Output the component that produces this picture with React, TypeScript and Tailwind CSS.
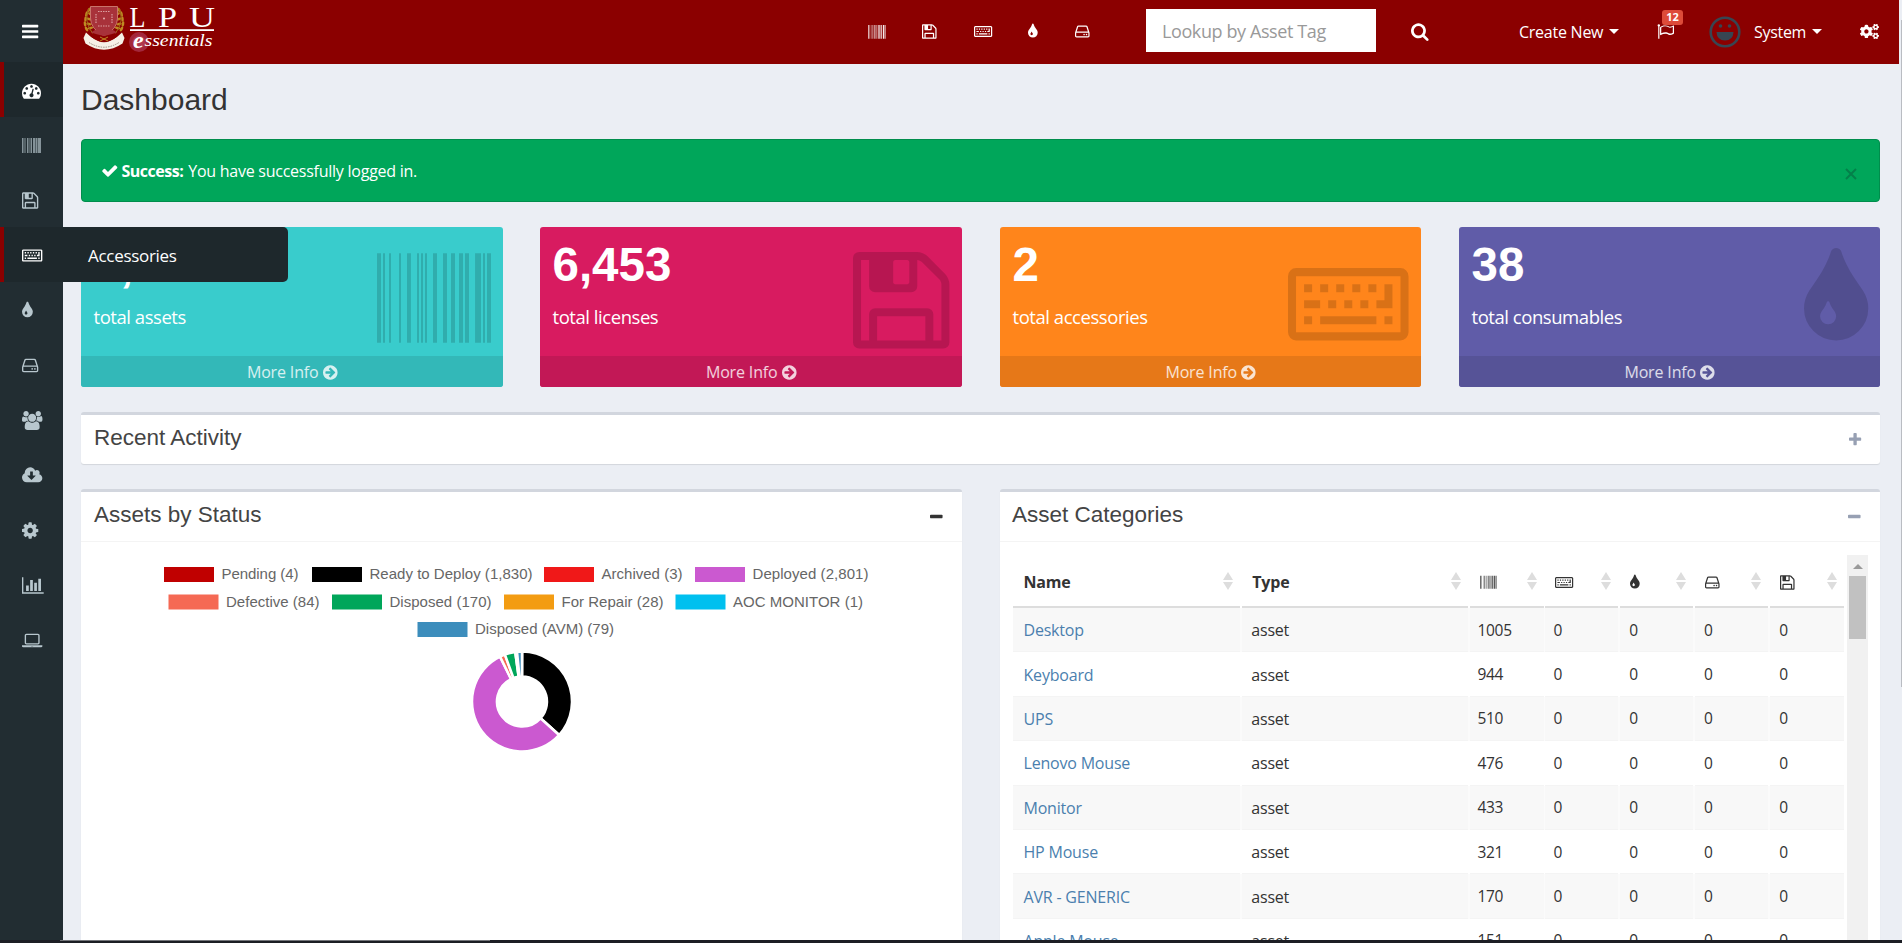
import React from "react";
import { FaCogs } from "react-icons/fa";

type Glyph = { w: number; d: string };

const G: Record<string, Glyph> = {
  bars: { w: 1536, d: "M1536 1344v128q0 26-19 45t-45 19h-1408q-26 0-45-19t-19-45v-128q0-26 19-45t45-19h1408q26 0 45 19t19 45zm0-512v128q0 26-19 45t-45 19h-1408q-26 0-45-19t-19-45v-128q0-26 19-45t45-19h1408q26 0 45 19t19 45zm0-512v128q0 26-19 45t-45 19h-1408q-26 0-45-19t-19-45v-128q0-26 19-45t45-19h1408q26 0 45 19t19 45z" },
  dash: { w: 1792, d: "M384 1152q0-53-37.5-90.5t-90.5-37.5-90.5 37.5-37.5 90.5 37.5 90.5 90.5 37.5 90.5-37.5 37.5-90.5zm192-448q0-53-37.5-90.5t-90.5-37.5-90.5 37.5-37.5 90.5 37.5 90.5 90.5 37.5 90.5-37.5 37.5-90.5zm428 481l101-382q6-26-7.5-48.5t-38.5-29.5-48 6.5-30 39.5l-101 382q-60 5-107 43.5t-63 98.5q-20 77 20 146t117 89 146-20 89-117q16-60-6-117t-72-91zm660-33q0-53-37.5-90.5t-90.5-37.5-90.5 37.5-37.5 90.5 37.5 90.5 90.5 37.5 90.5-37.5 37.5-90.5zm-640-640q0-53-37.5-90.5t-90.5-37.5-90.5 37.5-37.5 90.5 37.5 90.5 90.5 37.5 90.5-37.5 37.5-90.5zm448 192q0-53-37.5-90.5t-90.5-37.5-90.5 37.5-37.5 90.5 37.5 90.5 90.5 37.5 90.5-37.5 37.5-90.5zm320 448q0 261-141 483-19 29-54 29h-1402q-35 0-54-29-141-221-141-483 0-182 71-348t191-286 286-191 348-71 348 71 286 191 191 286 71 348z" },
  barcode: { w: 1792, d: "M63 1600h-63v-1408h63v1408zM126 1600h-32v-1407h32v1407zM220 1600h-31v-1407h31v1407zM377 1600h-31v-1407h31v1407zM534 1600h-62v-1407h62v1407zM660 1600h-31v-1407h31v1407zM723 1600h-31v-1407h31v1407zM786 1600h-31v-1407h31v1407zM943 1600h-63v-1407h63v1407zM1100 1600h-63v-1407h63v1407zM1226 1600h-63v-1407h63v1407zM1352 1600h-63v-1407h63v1407zM1446 1600h-63v-1407h63v1407zM1635 1600h-94v-1407h94v1407zM1698 1600h-32v-1407h32v1407zM1792 1600h-63v-1407h63v1407z" },
  floppy: { w: 1536, d: "M384 1536h768v-384h-768v384zm896 0h128v-896q0-14-10-38.500t-20-34.500l-281-281q-10-10-34-20t-39-10v416q0 40-28 68t-68 28h-576q-40 0-68-28t-28-68v-416h-128v1280h128v-416q0-40 28-68t68-28h832q40 0 68 28t28 68v416zm-384-928v-320q0-13-9.500-22.500t-22.500-9.500h-192q-13 0-22.500 9.500t-9.500 22.500v320q0 13 9.500 22.500t22.500 9.500h192q13 0 22.500-9.500t9.500-22.500zm640 32v928q0 40-28 68t-68 28h-1344q-40 0-68-28t-28-68v-1344q0-40 28-68t68-28h928q40 0 88 20t76 48l280 280q28 28 48 76t20 88z" },
  keyboard: { w: 1920, d: "M128 320h1664q53 0 90.500 37.500t37.500 90.500v896q0 53-37.500 90.500t-90.500 37.500h-1664q-53 0-90.500-37.500t-37.500-90.500v-896q0-53 37.500-90.500t90.500-37.500zM128 448v896h1664v-896zM256 576h128v128h-128zM512 576h128v128h-128zM768 576h128v128h-128zM1024 576h128v128h-128zM1280 576h128v128h-128zM1536 576h128v384h-256v-128h128zM256 832h256v128h-256zM640 832h128v128h-128zM896 832h128v128h-128zM1152 832h128v128h-128zM256 1088h128v128h-128zM512 1088h896v128h-896zM1536 1088h128v128h-128z" },
  tint: { w: 1024, d: "M512 1152q0-36-20-69-1-1-15.500-22.500t-25.500-38-25-44-21-50.500q-4-16-21-16t-21 16q-7 23-21 50.500t-25 44-25.500 38-15.500 22.500q-20 33-20 69 0 53 37.500 90.500t90.500 37.500 90.500-37.500 37.500-90.500zm512-128q0 212-150 362t-362 150-362-150-150-362q0-145 81-275 6-9 62.500-90.500t101-151 99.500-178 83-201.500q9-30 34-47t51-17 51.500 17 33.500 47q28 93 83 201.500t99.500 178 101 151 62.500 90.500q81 127 81 275z" },
  hdd: { w: 1536, d: "M1040 1216q0 33-23.500 56.500t-56.500 23.500-56.500-23.500-23.500-56.500 23.500-56.500 56.500-23.500 56.500 23.500 23.500 56.500zm256 0q0 33-23.500 56.500t-56.500 23.500-56.500-23.500-23.500-56.500 23.500-56.500 56.500-23.500 56.500 23.500 23.500 56.500zm112 160v-320q0-13-9.500-22.500t-22.500-9.500h-1216q-13 0-22.500 9.500t-9.500 22.500v320q0 13 9.500 22.500t22.500 9.500h1216q13 0 22.500-9.500t9.500-22.500zm-1230-480h1180l-157-482q-4-13-16-21.500t-26-8.500h-782q-14 0-26 8.500t-16 21.500zm1358 160v320q0 66-47 113t-113 47h-1216q-66 0-113-47t-47-113v-320q0-25 16-75l197-606q17-53 63-86t101-33h782q55 0 101 33t63 86l197 606q16 50 16 75z" },
  users: { w: 1920, d: "M593 896q-162 5-265 128h-134q-82 0-138-40.500t-56-118.500q0-353 124-353 6 0 43.500 21t97.500 42.500 119 21.500q67 0 133-23-5 37-5 66 0 159 93 293zm1071 637q0 120-73 189.500t-194 69.500h-874q-121 0-194-69.500t-73-189.500q0-53 3.500-103.500t14-109 26.500-108.500 43-97.500 62-81 85.500-53.500 111.500-20q10 0 43 21.500t73 48 107 48 135 21.500 135-21.500 107-48 73-48 43-21.500q61 0 111.500 20t85.500 53.500 62 81 43 97.500 26.500 108.500 14 109 3.500 103.500zm-1024-1277q0 106-75 181t-181 75-181-75-75-181 75-181 181-75 181 75 75 181zm704 384q0 159-112.500 271.500t-271.500 112.500-271.500-112.500-112.500-271.500 112.500-271.500 271.500-112.500 271.500 112.500 112.500 271.500zm576 225q0 78-56 118.500t-138 40.500h-134q-103-123-265-128 93-134 93-293 0-29-5-66 66 23 133 23 59 0 119-21.500t97.500-42.500 43.500-21q124 0 124 353zm-128-609q0 106-75 181t-181 75-181-75-75-181 75-181 181-75 181 75 75 181z" },
  cloud: { w: 1920, d: "M1280 928q0-14-9-23t-23-9h-224v-352q0-13-9.500-22.500t-22.500-9.500h-192q-13 0-22.500 9.500t-9.500 22.500v352h-224q-13 0-22.500 9.500t-9.500 22.500q0 14 9 23l352 352q9 9 23 9t23-9l351-351q10-12 10-24zm640 224q0 159-112.500 271.500t-271.500 112.500h-1088q-185 0-316.500-131.500t-131.500-316.500q0-130 70-240t188-165q-2-30-2-43 0-212 150-362t362-150q156 0 285.500 87t188.500 231q71-62 166-62 106 0 181 75t75 181q0 76-41 138 130 31 213.500 135.500t83.500 238.500z" },
  cog: { w: 1536, d: "M1024 896q0-106-75-181t-181-75-181 75-75 181 75 181 181 75 181-75 75-181zm512-109v222q0 12-8 23t-20 13l-185 28q-19 54-39 91 35 50 107 138 10 12 10 25t-9 23q-27 37-99 108t-94 71q-12 0-26-9l-138-108q-44 23-91 38-16 136-29 186-7 28-36 28h-222q-14 0-24.500-8.500t-11.500-21.500l-28-184q-49-16-90-37l-141 107q-10 9-25 9-14 0-25-11-126-114-165-168-7-10-7-23 0-12 8-23 15-21 51-66.500t54-70.500q-27-50-41-99l-183-27q-13-2-21-12.500t-8-23.500v-222q0-12 8-23t19-13l186-28q14-46 39-92-40-57-107-138-10-12-10-24 0-10 9-23 26-36 98.500-107.500t94.500-71.500q13 0 26 10l138 107q44-23 91-38 16-136 29-186 7-28 36-28h222q14 0 24.500 8.500t11.500 21.500l28 184q49 16 90 37l142-107q9-9 24-9 13 0 25 10 129 119 165 170 7 8 7 22 0 12-8 23-15 21-51 66.500t-54 70.500q26 50 41 98l183 28q13 2 21 12.500t8 23.500z" },
  chart: { w: 2048, d: "M640 896v512h-256v-512h256zm384-512v1024h-256v-1024h256zm1024 1152v128h-2048v-1536h128v1408h1920zm-640-896v768h-256v-768h256zm384-384v1152h-256v-1152h256z" },
  laptop: { w: 1920, d: "M416 1280q-66 0-113-47t-47-113v-704q0-66 47-113t113-47h1088q66 0 113 47t47 113v704q0 66-47 113t-113 47h-1088zm-32-864v704q0 13 9.500 22.500t22.500 9.500h1088q13 0 22.500-9.500t9.500-22.500v-704q0-13-9.500-22.500t-22.500-9.500h-1088q-13 0-22.500 9.500t-9.500 22.500zm1376 928h160v96q0 40-47 68t-113 28h-1600q-66 0-113-28t-47-68v-96h1760zm-720 96q16 0 16-16t-16-16h-160q-16 0-16 16t16 16h160z" },
  search: { w: 1664, d: "M1152 832q0-185-131.500-316.500t-316.500-131.500-316.500 131.500-131.500 316.500 131.500 316.500 316.500 131.500 316.500-131.500 131.500-316.500zm512 832q0 52-38 90t-90 38q-54 0-90-38l-343-342q-179 124-399 124-143 0-273.500-55.500t-225-150-150-225-55.500-273.500 55.500-273.500 150-225 225-150 273.500-55.500 273.500 55.500 225 150 150 225 55.500 273.500q0 220-124 399l343 343q37 37 37 90z" },
  flag: { w: 1792, d: "M1664 1015v-616q-169 91-306 91-82 0-145-32-100-49-184-76.500t-178-27.500q-173 0-403 127v599q245-113 433-113 55 0 103.500 7.500t98 26 77 31 82.500 39.500l28 14q44 22 101 22 120 0 293-92zM320 256q0 72-64 110v1266q0 13-9.500 22.500t-22.500 9.500h-64q-13 0-22.500-9.500t-9.500-22.500v-1266q-64-38-64-110 0-53 37.500-90.500t90.500-37.500 90.500 37.500 37.500 90.500zm1472 64v763q0 39-35 57-10 5-17 9-218 116-369 116-88 0-158-35l-28-14q-64-33-99-48t-91-29-114-14q-102 0-235.500 44t-228.500 102q-15 9-33 9-16 0-32-8-32-19-32-56v-742q0-35 31-55 35-21 78.500-42.500t114-52 152.500-49.500 155-19q112 0 209 31t209 86q38 19 89 19 122 0 310-112 22-12 31-17 31-16 62 2 31 20 31 55z" },
  check: { w: 1792, d: "M1671 566q0 40-28 68l-724 724-136 136q-28 28-68 28t-68-28l-136-136-362-362q-28-28-28-68t28-68l136-136q28-28 68-28t68 28l294 295 656-657q28-28 68-28t68 28l136 136q28 28 28 68z" },
  arrow: { w: 1536, d: "M1285 896q0-27-18-45l-91-91-362-362q-18-18-45-18t-45 18l-91 91q-18 18-18 45t18 45l189 189h-502q-26 0-45 19t-19 45v128q0 26 19 45t45 19h502l-189 189q-19 19-19 45t19 45l91 91q18 18 45 18t45-18l362-362 91-91q18-18 18-45zm251 0q0 209-103 385.500t-279.500 279.500-385.500 103-385.500-103-279.500-279.500-103-385.500 103-385.500 279.500-279.500 385.500-103 385.500 103 279.500 279.500 103 385.500z" },
  plus: { w: 1408, d: "M1408 736v192q0 40-28 68t-68 28h-416v416q0 40-28 68t-68 28h-192q-40 0-68-28t-28-68v-416h-416q-40 0-68-28t-28-68v-192q0-40 28-68t68-28h416v-416q0-40 28-68t68-28h192q40 0 68 28t28 68v416h416q40 0 68 28t28 68z" },
  minus: { w: 1408, d: "M1408 736v192q0 40-28 68t-68 28h-1216q-40 0-68-28t-28-68v-192q0-40 28-68t68-28h1216q40 0 68 28t28 68z" },
};

function Icon({ name, size, className = "" }: { name: string; size: number; className?: string }) {
  const g = G[name];
  return (
    <svg
      className={`block shrink-0 ${className}`}
      width={(g.w / 1792) * size}
      height={size}
      viewBox={`0 0 ${g.w} 1792`}
      fill="currentColor"
      fillRule="evenodd"
      overflow="visible"
      aria-hidden="true"
    >
      <path d={g.d} />
    </svg>
  );
}

const nav = ["dash", "barcode", "floppy", "keyboard", "tint", "hdd", "users", "cloud", "cog", "chart", "laptop"];

function Sidebar() {
  return (
    <aside className="flex w-[63px] shrink-0 flex-col bg-[#222d32] text-[#b8c7ce]">
      <div className="flex h-[62px] shrink-0 items-center pl-[22px] text-white">
        <Icon name="bars" size={19} />
      </div>
      {nav.map((n, i) => {
        const on = i === 0 || i === 3;
        return (
          <div
            key={n}
            className={`relative flex h-[55px] shrink-0 items-center border-l-4 pt-0.5 pl-[18px] ${
              on ? "border-[#8b0000] bg-[#1e282c] text-white" : "border-transparent"
            }`}
          >
            <Icon name={n} size={19} />
            {i === 3 && (
              <div className="absolute top-0 left-[59px] z-10 flex h-[55px] w-[225px] items-center rounded-r-[5px] bg-[#1e282c] pt-0.5 pl-[25px] text-[17px] tracking-[-0.3px] text-white">
                Accessories
              </div>
            )}
          </div>
        );
      })}
    </aside>
  );
}

function Laurel({ flip }: { flip?: boolean }) {
  const leaves = [
    [6, 7, -60], [3.5, 11, -75], [2.5, 16, -85], [2, 21, -100], [3.5, 26, -120],
    [7.500, 11, 30], [6, 16, 20], [6, 21, 10], [7.5, 25, -10],
  ];
  return (
    <g transform={flip ? "translate(42 0) scale(-1 1)" : undefined} fill="#c08a22">
      {leaves.map(([x, y, r], i) => (
        <ellipse key={i} cx={x} cy={y - 2} rx="2.700" ry="1.300" transform={`rotate(${r} ${x} ${y - 2})`} />
      ))}
      <path d="M6 3Q0 16 10 29" fill="none" stroke="#9c6a1a" strokeWidth="1" />
    </g>
  );
}

function Logo() {
  return (
    <svg width="134" height="50" viewBox="0 0 134 50" className="block overflow-visible" aria-label="LPU Essentials">
      <Laurel />
      <Laurel flip />
      <path d="M7.500 1.500H34.500V13Q34.500 24 21 31Q7.500 24 7.500 13Z" fill="#a8323a" stroke="#c9746a" strokeWidth="1" />
      <path d="M15 6.500H27M13 9v10M29 9v10M15 21H27" stroke="#dba0a0" strokeWidth="1.200" strokeDasharray="1.500 1" fill="none" />
      <circle cx="21" cy="13.500" r="1" fill="#e8b0b0" />
      <path d="M3 27.500Q21 46 39 27.500L41.500 33L39.500 38.500Q21 51 2.500 38.500L0.500 33Z" fill="#f6f0e6" />
      <path d="M8 31.500Q21 43 34 31.500L32 27.500Q21 34 10 27.500Z" fill="#8b0000" />
      <path d="M8 27.500Q13 29 21 31Q29 29 34 27.500L30 25H12Z" fill="#a8323a" />
      <path d="M17 36L25 32M17 32L25 36" stroke="#c08a22" strokeWidth="1" />
      <path d="M6 37.500Q21 47 36 37.500" stroke="#9c9084" strokeWidth="1" strokeDasharray="1.500 1" fill="none" />
      <g fill="#fff" style={{ fontFamily: "'Liberation Serif', serif" }}>
        <text x="46.500" y="21.500" fontSize="30" textLength="16" lengthAdjust="spacingAndGlyphs">L</text>
        <text x="75" y="21.500" fontSize="30" textLength="19" lengthAdjust="spacingAndGlyphs">P</text>
        <text x="106" y="21.500" fontSize="30" textLength="26" lengthAdjust="spacingAndGlyphs">U</text>
      </g>
      <rect x="47" y="24.200" width="84" height="1.800" fill="#fff" />
      <circle cx="56" cy="37" r="10" fill="#a3273c" />
      <circle cx="56" cy="37" r="6.500" fill="#b8445a" opacity=".6" />
      <g fill="#fff" fontStyle="italic" style={{ fontFamily: "'Liberation Serif', serif" }}>
        <text x="50" y="42.500" fontSize="24" fontWeight="700">e</text>
        <text x="61.500" y="40.500" fontSize="17" textLength="68" lengthAdjust="spacingAndGlyphs">ssentials</text>
      </g>
    </svg>
  );
}

function Caret() {
  return <span className="ml-[7px] inline-block border-x-[5px] border-t-[5px] border-x-transparent border-t-white" />;
}

function Header() {
  return (
    <header className="mr-[3px] flex h-16 shrink-0 items-center bg-[#8b0000] pb-px text-white">
      <div className="h-[60px] w-[805px] pt-[3px] pl-5">
        <Logo />
      </div>
      <div className="flex w-[278px] items-center">
        <div className="w-[54px]"><Icon name="barcode" size={17.5} /></div>
        <div className="w-[52px]"><Icon name="floppy" size={17} /></div>
        <div className="w-[54px]"><Icon name="keyboard" size={17} /></div>
        <div className="w-[47px]"><Icon name="tint" size={17} /></div>
        <Icon name="hdd" size={17} />
      </div>
      <div className="mt-[-2px] flex h-[43px] w-[230px] items-center bg-white pt-0.5 pl-4 text-[18px] tracking-[-0.4px] text-[#999]">
        Lookup by Asset Tag
      </div>
      <div className="ml-[35px] w-[108px]"><Icon name="search" size={19} /></div>
      <div className="flex w-[138px] items-center text-[16px] tracking-[-0.25px]">
        <span className="w-[83px] whitespace-nowrap">Create New</span>
        <Caret />
      </div>
      <div className="relative w-[53px]">
        <Icon name="flag" size={17} />
        <span className="absolute top-[-13px] left-[5px] flex h-[15px] w-[21px] items-center justify-center rounded-[3px] bg-[#dd4b39] text-[11px] font-bold">
          12
        </span>
      </div>
      <svg width="32" height="32" viewBox="0 0 32 32" className="ml-[-1px] block">
        <circle cx="16" cy="16" r="14.300" fill="none" stroke="#374652" strokeWidth="2.600" />
        <circle cx="11.500" cy="10" r="1.800" fill="#374652" />
        <circle cx="20.500" cy="10" r="1.800" fill="#374652" />
        <path d="M7.500 16H24.500Q24 24.500 16 24.500Q8 24.500 7.500 16Z" fill="#374652" />
      </svg>
      <span className="ml-[13px] w-[51px] text-[16px] tracking-[-0.3px]">System</span>
      <Caret />
      <FaCogs className="ml-[38px] text-[19px]" />
    </header>
  );
}

const cards = [
  { n: "5,000", label: "total assets", icon: "barcode", s: 114, box: "w-[422px] bg-[#39cccc]", foot: "bg-[#33b8b8]", pos: "right-[12px] top-[14px]" },
  { n: "6,453", label: "total licenses", icon: "floppy", s: 112.5, box: "w-[422px] bg-[#d81b60]", foot: "bg-[#c21856]", pos: "right-[13px] top-[17px]" },
  { n: "2", label: "total accessories", icon: "keyboard", s: 112.5, box: "w-[421px] bg-[#ff851b]", foot: "bg-[#e67818]", pos: "right-[12px] top-[21px]" },
  { n: "38", label: "total consumables", icon: "tint", s: 112.5, box: "w-[421px] bg-[#605ca8]", foot: "bg-[#565397]", pos: "right-[12px] top-[17px]" },
];

function Card({ c }: { c: (typeof cards)[number] }) {
  return (
    <div className={`relative flex h-40 flex-col overflow-hidden rounded-[3px] ${c.box} text-white`}>
      <div className={`absolute ${c.pos} text-black/15`}>
        <Icon name={c.icon} size={c.s} />
      </div>
      <div className="flex h-[129px] flex-col px-[12.500px] pt-[12px]">
        <div className="font-['Liberation_Sans',sans-serif] text-[47.5px] leading-[52px] font-bold">{c.n}</div>
        <div className="mt-[12px] text-[18.5px] leading-[28px] tracking-[-0.45px]">{c.label}</div>
      </div>
      <div className={`relative flex h-[31px] items-center justify-center gap-1 ${c.foot} pt-px text-[16px] text-white/80`}>
        <span className="tracking-[-0.15px]">More Info</span>
        <Icon name="arrow" size={17} />
      </div>
    </div>
  );
}

const box = "rounded-[3px] border-t-[3px] border-[#d2d6de] bg-white shadow-[0_1px_1px_rgba(0,0,0,0.1)]";
const boxTitle = "mt-[-3px] font-['Liberation_Sans',sans-serif] text-[22.5px] text-[#444]";

const legend = [
  [
    ["Pending (4)", "#c00000", 164, 77],
    ["Ready to Deploy (1,830)", "#000", 312, 163],
    ["Archived (3)", "#f01818", 544, 81],
    ["Deployed (2,801)", "#cb59d0", 695, 116],
  ],
  [
    ["Defective (84)", "#f56954", 168.5, 93.5],
    ["Disposed (170)", "#00a65a", 332, 102],
    ["For Repair (28)", "#f39c12", 504, 102],
    ["AOC MONITOR (1)", "#00c0ef", 675.5, 130],
  ],
  [["Disposed (AVM) (79)", "#3c8dbc", 417.5, 139]],
] as [string, string, number, number][][];

const slices: [number, string][] = [
  [4, "#c00000"], [1830, "#000"], [3, "#f01818"], [2801, "#cb59d0"], [84, "#f56954"],
  [170, "#00a65a"], [28, "#f39c12"], [1, "#00c0ef"], [79, "#3c8dbc"],
];

function Donut() {
  const total = slices.reduce((s, [v]) => s + v, 0);
  const R = 50, r = 25, cx = 441, cy = 159.5;
  let a = -Math.PI / 2;
  const pt = (q: number, t: number) => `${(cx + q * Math.cos(t)).toFixed(2)} ${(cy + q * Math.sin(t)).toFixed(2)}`;
  return (
    <g stroke="#fff" strokeWidth="2.500" strokeLinejoin="bevel">
      {slices.map(([v, fill], i) => {
        const b = a + (v / total) * Math.PI * 2;
        const big = b - a > Math.PI ? 1 : 0;
        const d = `M${pt(R, a)}A${R} ${R} 0 ${big} 1 ${pt(R, b)}L${pt(r, b)}A${r} ${r} 0 ${big} 0 ${pt(r, a)}Z`;
        a = b;
        return <path key={i} d={d} fill={fill} />;
      })}
    </g>
  );
}

function StatusChart() {
  return (
    <svg width="881" height="240" viewBox="0 0 881 240" className="block">
      {legend.map((row, ri) =>
        row.map(([t, fill, x, w]) => (
          <g key={t}>
            <rect x={x - 81} y={25 + ri * 27.5} width="50" height="15" fill={fill} />
            <text
              x={x - 81 + 57.5}
              y={37 + ri * 27.5}
              fontSize="15"
              fill="#666"
              textLength={w}
              style={{ fontFamily: "'Liberation Sans', sans-serif" }}
            >
              {t}
            </text>
          </g>
        ))
      )}
      <Donut />
    </svg>
  );
}

const rows: [string, number][] = [
  ["Desktop", 1005], ["Keyboard", 944], ["UPS", 510], ["Lenovo Mouse", 476],
  ["Monitor", 433], ["HP Mouse", 321], ["AVR - GENERIC", 170], ["Apple Mouse", 151],
];

const cols = "grid grid-cols-[227px_226px_74px_73px_73px_73.500px_74px] gap-x-[1.800px]";

function Sort() {
  return (
    <svg width="10" height="18" viewBox="0 0 10 18" className="mr-[7px] block shrink-0 self-start" fill="#ddd">
      <path d="M5 0L10 8H0ZM5 18L0 10H10Z" />
    </svg>
  );
}

function CategoryTable() {
  const heads: React.ReactNode[] = [
    "Name",
    "Type",
    ...["barcode", "keyboard", "tint", "hdd", "floppy"].map((n) => <Icon key={n} name={n} size={n === "barcode" ? 16.5 : 17} />),
  ];
  return (
    <div className="w-[830px] text-[16px] tracking-[-0.2px] text-[#333]">
      <div className={cols}>
        {heads.map((h, i) => (
          <div
            key={i}
            className={`flex h-[53px] items-start justify-between border-b-2 border-[#ddd] pt-[17px] font-bold ${i < 2 ? "pl-[10.500px]" : "pl-[10px]"}`}
          >
            <span className="flex h-5 items-center">{h}</span>
            <Sort />
          </div>
        ))}
      </div>
      {rows.map(([name, n], ri) => (
        <div key={name} className={`${cols} ${ri % 2 ? "" : "bg-[#fbfbfb]"}`}>
          {[name, "asset", n, 0, 0, 0, 0].map((v, i) => (
            <div
              key={i}
              className={`flex h-[44.400px] items-center border-b border-[#f4f4f4] pt-px ${ri % 2 ? "" : "bg-[#f8f8f8]"} ${
                i === 0 ? "pl-[10.500px] text-[#4b7fae]" : i === 1 ? "pl-[9.500px]" : i === 2 ? "pl-2 text-[15.500px] tracking-[-0.350px]" : i === 3 ? "pl-[8px] text-[15.500px]" : "pl-[9px] text-[15.500px]"
              }`}
            >
              {v}
            </div>
          ))}
        </div>
      ))}
    </div>
  );
}

export default function App() {
  return (
    <div className="relative flex h-[943px] w-[1902px] overflow-hidden bg-[#ebeef4] font-['Open_Sans','Noto_Sans',sans-serif]">
      <Sidebar />
      <div className="flex min-w-0 grow flex-col">
        <Header />
        <main className="flex flex-col pr-[22px] pl-[18px]">
          <h1 className="mt-[18px] h-[57px] font-['Liberation_Sans',sans-serif] text-[30px] leading-[36px] text-[#333]">Dashboard</h1>
          <div className="flex h-[63px] items-center rounded-[4px] border border-[#008d4c] bg-[#00a65a] pr-[22px] pl-[19px] text-[16px] tracking-[-0.25px] text-white">
            <Icon name="check" size={17.5} />
            <b className="ml-[3px] tracking-[-0.5px]">Success:</b>
            <span className="ml-[5px]">You have successfully logged in.</span>
            <svg width="12" height="12" viewBox="0 0 12 12" className="mt-1.5 ml-auto block" stroke="#04804a" strokeWidth="2">
              <path d="M1 1L11 11M11 1L1 11" />
            </svg>
          </div>
          <div className="mt-[25px] grid grid-cols-[459px_460px_459px_421px]">
            {cards.map((c) => (
              <Card key={c.label} c={c} />
            ))}
          </div>
          <section className={`mt-[25px] flex h-[52px] items-center justify-between pr-[19px] pl-[13px] ${box}`}>
            <h2 className={boxTitle}>Recent Activity</h2>
            <Icon name="plus" size={15.5} className="text-[#97a0b3]" />
          </section>
          <div className="mt-[25px] grid grid-cols-[881px_880px] gap-[38px]">
            <section className={`h-[480px] ${box}`}>
              <div className="flex h-[50px] items-center justify-between border-b border-[#f4f4f4] pr-[19px] pl-[13px]">
                <h2 className={boxTitle}>Assets by Status</h2>
                <Icon name="minus" size={16} className="text-[#333]" />
              </div>
              <StatusChart />
            </section>
            <section className={`h-[480px] ${box}`}>
              <div className="flex h-[50px] items-center justify-between border-b border-[#f4f4f4] pr-[19px] pl-3">
                <h2 className={boxTitle}>Asset Categories</h2>
                <Icon name="minus" size={16} className="text-[#97a0b3]" />
              </div>
              <div className="flex justify-between pt-[13px] pr-3 pl-[13px]">
                <CategoryTable />
                <div className="flex h-[420px] w-[21px] flex-col items-center bg-[#f1f1f1] pt-[9px]">
                  <span className="border-x-[5px] border-b-[5px] border-x-transparent border-b-[#9a9a9a]" />
                  <span className="mt-[7px] h-[63px] w-[17px] bg-[#c1c1c1]" />
                </div>
              </div>
            </section>
          </div>
        </main>
      </div>
      <div className="absolute top-5 right-0 h-[667px] w-px bg-[#b9bcc2]" />
      <div className="absolute bottom-0 left-0 flex h-[3px] w-full flex-col bg-[#1c1e24]">
        <div className="ml-[60px] h-px w-[430px] bg-[#75777b]" />
      </div>
    </div>
  );
}
